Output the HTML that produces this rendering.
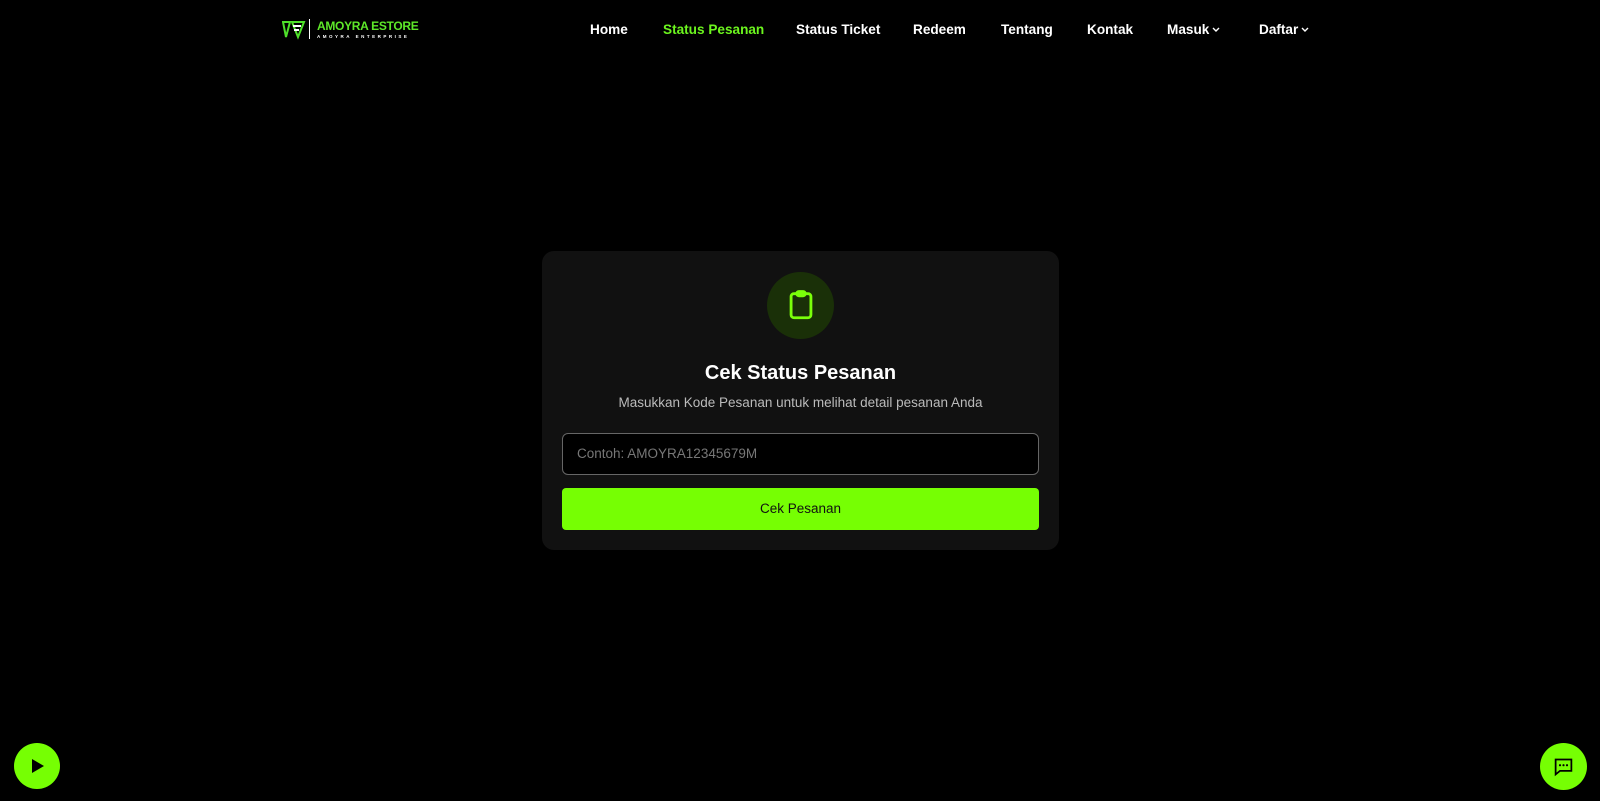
<!DOCTYPE html>
<html><head><style>
*{margin:0;padding:0;box-sizing:border-box}
body{width:1600px;height:801px;background:#000;font-family:"Liberation Sans",sans-serif;position:relative;overflow:hidden;color:#fff}
.nav a{position:absolute;top:22px;font-size:13.6px;font-weight:bold;color:#fff;text-decoration:none}
.nav svg{vertical-align:middle;margin-left:3px}
.card{position:absolute;left:542px;top:251px;width:517px;height:299px;background:#111;border-radius:12px}
</style></head><body>
<div style="position:absolute;left:282px;top:19px;">
<svg width="24" height="21" viewBox="0 0 24 21"><path d="M1 3 L8 3 L4 18 Z M10 3 L22 3 L16 18 Z" fill="none" stroke="#4ee02a" stroke-width="2"/><path d="M11 7h8M12 11h5" stroke="#fff" stroke-width="2"/></svg>
</div>
<div style="position:absolute;left:309px;top:19px;width:1px;height:20px;background:#fff"></div>
<div style="position:absolute;left:317px;top:19px;font-size:12px;font-weight:bold;color:#5ee829;letter-spacing:-0.3px">AMOYRA ESTORE</div>
<div style="position:absolute;left:317px;top:34px;font-size:4.5px;font-weight:bold;color:#fff;letter-spacing:2.5px">AMOYRA ENTERPRISE</div>
<div class="nav">
<a style="left:590px">Home</a>
<a style="left:663px;color:#6cf51e">Status Pesanan</a>
<a style="left:796px">Status Ticket</a>
<a style="left:913px">Redeem</a>
<a style="left:1001px">Tentang</a>
<a style="left:1087px">Kontak</a>
<a style="left:1167px">Masuk<svg width="8" height="6"><path d="M1 1l3 3 3-3" stroke="#fff" stroke-width="1.4" fill="none"/></svg></a>
<a style="left:1259px">Daftar<svg width="8" height="6"><path d="M1 1l3 3 3-3" stroke="#fff" stroke-width="1.4" fill="none"/></svg></a>
</div>
<div class="card">
<div style="position:absolute;left:225px;top:21px;width:67px;height:67px;border-radius:50%;background:#1a3008"></div>
<svg style="position:absolute;left:242px;top:37px" width="34" height="34" viewBox="0 0 24 24" fill="none" stroke="#7aff0a" stroke-width="2" stroke-linejoin="round"><rect x="5" y="4" width="14" height="17" rx="2"/><rect x="9" y="2.5" width="6" height="3" rx="1.5"/></svg>
<div style="position:absolute;left:0;right:0;top:111px;text-align:center;font-size:20px;font-weight:bold">Cek Status Pesanan</div>
<div style="position:absolute;left:0;right:0;top:144px;text-align:center;font-size:13.5px;color:#bbb">Masukkan Kode Pesanan untuk melihat detail pesanan Anda</div>
<div style="position:absolute;left:20px;top:182px;width:477px;height:42px;border:1px solid #666;border-radius:6px;background:#000;color:#777;font-size:13.5px;padding:12px 14px">Contoh: AMOYRA12345679M</div>
<div style="position:absolute;left:20px;top:237px;width:477px;height:42px;border-radius:4px;background:#76ff03;color:#111;font-size:13.5px;text-align:center;line-height:42px">Cek Pesanan</div>
</div>
<div style="position:absolute;left:14px;top:743px;width:46px;height:46px;border-radius:50%;background:#76ff03"><svg style="position:absolute;left:16px;top:15px" width="16" height="16"><path d="M2 1 L14 8 L2 15Z" fill="#000"/></svg></div>
<div style="position:absolute;left:1540px;top:743px;width:47px;height:47px;border-radius:50%;background:#76ff03"><svg style="position:absolute;left:13px;top:13px" width="21" height="21" viewBox="0 0 24 24" fill="none" stroke="#000" stroke-width="2"><path d="M3 4h18v13H8l-5 4z"/><path d="M8 10.5h.01M12 10.5h.01M16 10.5h.01" stroke-width="2.5" stroke-linecap="round"/></svg></div>
</body></html>
